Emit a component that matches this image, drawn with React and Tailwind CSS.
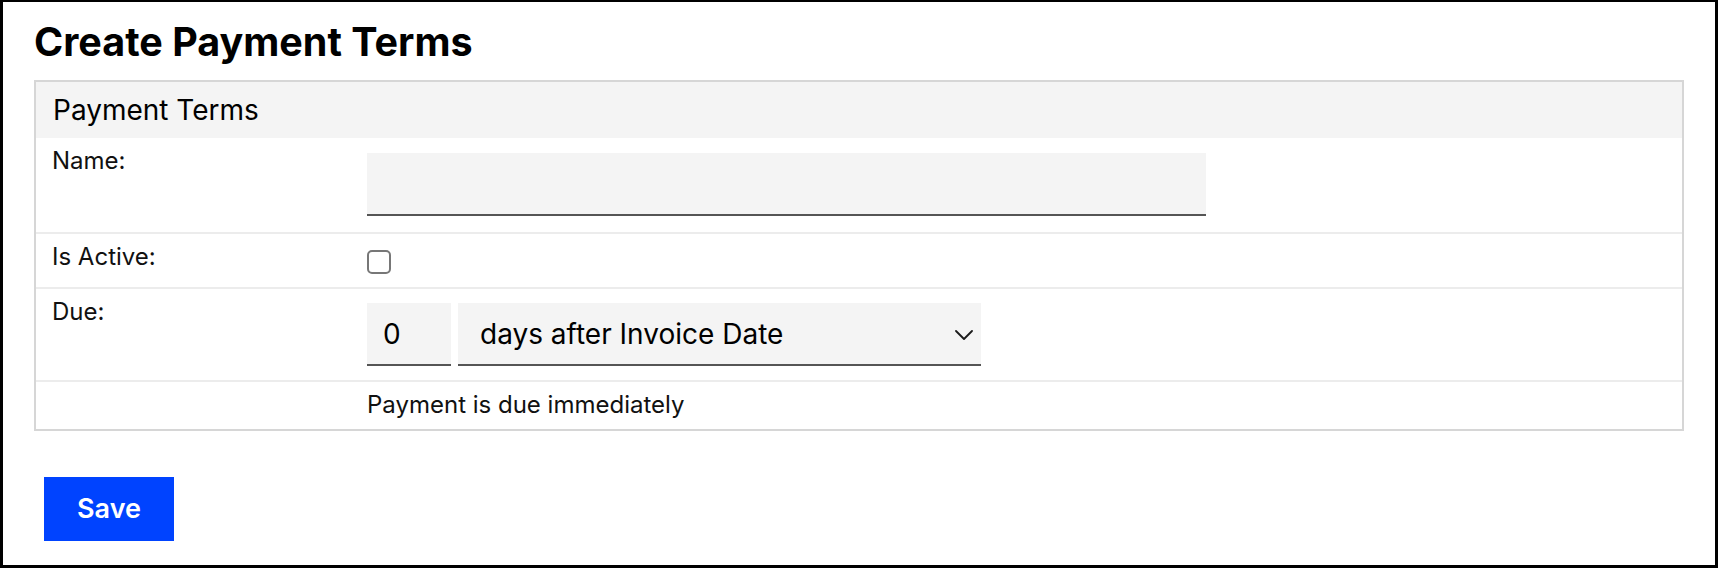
import React, { useState } from 'react';

const ChevronDown = () => (
  <svg width="18" height="10" viewBox="0 0 18 10" fill="none" className="pointer-events-none absolute right-[8px] top-[27px]">
    <polyline points="1,1 9,9 17,1" stroke="#1a1a1a" strokeWidth="1.8" strokeLinecap="round" strokeLinejoin="round" />
  </svg>
);

const Row = ({ label, children, last, className = '' }) => (
  <div className={`flex items-start pt-[9px] ${last ? '' : 'border-b-2 border-[#ececec]'} ${className}`}>
    <div className="w-[331px] shrink-0 pl-[16px] text-[24px] leading-[28px] text-[#111]">{label}</div>
    <div className="flex-1">{children}</div>
  </div>
);

export default function App() {
  const [name, setName] = useState('');
  const [active, setActive] = useState(false);
  const [days, setDays] = useState('0');
  const [basis, setBasis] = useState('invoice');

  return (
    <div
      className="w-[1718px] h-[568px] border-[3px] border-t-2 border-black bg-white px-[31px] pt-[18px] text-black"
      style={{ fontFamily: 'Inter, "Noto Sans", sans-serif' }}
    >
      <h1 className="text-[39.5px] leading-[44px] font-bold">Create Payment Terms</h1>

      {/* Form panel */}
      <div className="mt-[16px] border-2 border-[#d6d6d6]">
        <div className="bg-[#f4f4f4] px-[17px] py-[12px] text-[28px] leading-[32px]">Payment Terms</div>

        <Row label="Name:" className="pb-[16px]">
          <input
            type="text"
            value={name}
            onChange={(e) => setName(e.target.value)}
            className="mt-[6px] block h-[63px] w-[839px] bg-[#f4f4f4] border-b-2 border-[#555] px-[16px] text-[28px] outline-none"
          />
        </Row>

        <Row label="Is Active:" className="pb-[13px]">
          <input
            type="checkbox"
            checked={active}
            onChange={(e) => setActive(e.target.checked)}
            className="mt-[7px] block h-[24px] w-[24px] appearance-none rounded-[5px] border-2 border-[#777] bg-white"
          />
        </Row>

        <Row label="Due:" className="pb-[14px]">
          <div className="mt-[5px] flex gap-[7px]">
            <input
              type="text"
              value={days}
              onChange={(e) => setDays(e.target.value)}
              className="block h-[63px] w-[84px] bg-[#f4f4f4] border-b-2 border-[#555] px-[16px] text-[28px] outline-none"
            />
            <div className="relative">
              <select
                value={basis}
                onChange={(e) => setBasis(e.target.value)}
                className="block h-[63px] w-[523px] appearance-none bg-[#f4f4f4] border-b-2 border-[#555] pl-[22px] pr-[40px] text-[28px] outline-none"
              >
                <option value="invoice">days after Invoice Date</option>
                <option value="month">days after end of month</option>
              </select>
              <ChevronDown />
            </div>
          </div>
        </Row>

        <Row label="" last className="pb-[10px]">
          <p className="text-[24px] leading-[28px] text-[#111]">Payment is due immediately</p>
        </Row>
      </div>

      <button className="mt-[46px] ml-[10px] h-[64px] w-[130px] bg-[#0043ff] text-[27px] font-semibold text-white">
        Save
      </button>
    </div>
  );
}
